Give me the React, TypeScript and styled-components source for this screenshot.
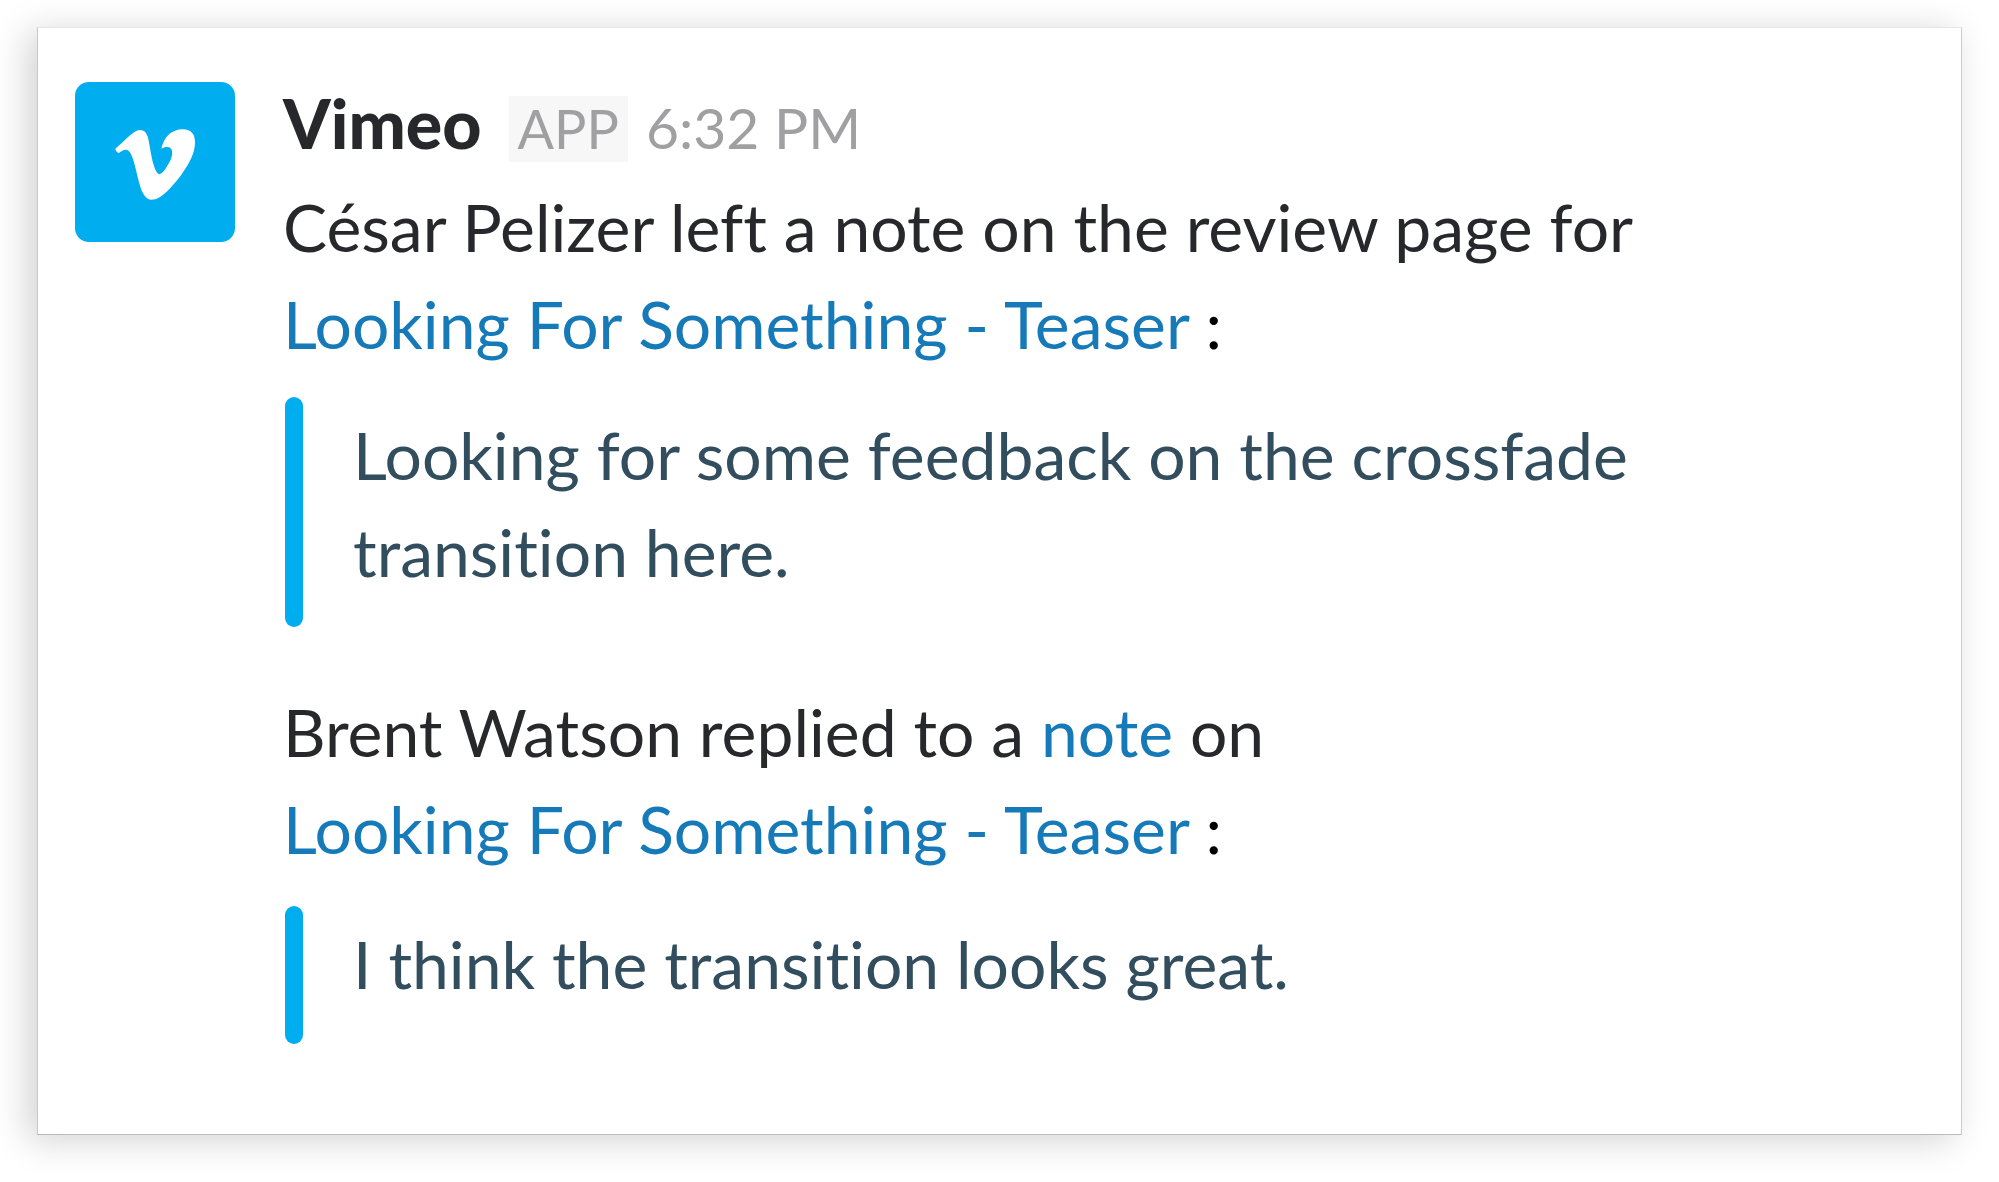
import React from 'react';
import styled, { createGlobalStyle } from 'styled-components';

const GlobalStyle = createGlobalStyle`
  body {
    margin: 0;
    background: #ffffff;
    font-family: Lato, 'Open Sans', sans-serif;
    font-variant-ligatures: none;
  }
`;

const Page = styled.main`
  padding: 27px 37px 46px;
`;

const Card = styled.article`
  display: flex;
  align-items: flex-start;
  gap: 48px;
  padding: 54px 72px 90px 37px;
  background: #ffffff;
  border: 1px solid;
  border-color: #e6e6e6 #cccccc #bbbbbb #c8c8c8;
  box-shadow: -9px 5px 34px rgba(0, 0, 0, 0.18);
`;

const Avatar = styled.svg`
  flex: none;
  width: 160px;
  height: 160px;
  border-radius: 14px;
  background: #00adef;
`;

const Content = styled.div`
  flex: 1;
  min-width: 0;
  color: #27282b;
  font-size: 66px;
  line-height: 97px;
`;

const Header = styled.header`
  display: flex;
  align-items: baseline;
  margin-bottom: 10px;
  line-height: 82px;
`;

const Sender = styled.strong`
  font-size: 68px;
  font-weight: 900;
`;

const AppBadge = styled.span`
  margin: 0 18px 0 27px;
  padding: 0 9px;
  background: #f7f7f7;
  color: #a0a0a2;
  font-size: 54px;
  line-height: 66px;
`;

const Time = styled.time`
  color: #a0a0a2;
  font-size: 57px;
`;

const Update = styled.section`
  & + & {
    margin-top: 56px;
  }
`;

const Sentence = styled.p`
  margin: 0;
`;

const Link = styled.a`
  color: #167ab9;
  text-decoration: none;
  white-space: nowrap;
`;

const Colon = styled.span`
  color: #000000;
`;

const Quote = styled.blockquote<{ $before: number; $after: number }>`
  display: flex;
  gap: 50px;
  margin: ${(p) => p.$before}px 0 0 2px;
  color: #314d5e;

  &::before {
    content: '';
    flex: none;
    width: 18px;
    border-radius: 9px;
    background: #00adef;
  }

  p {
    margin: 0;
    padding: 9px 0 ${(p) => p.$after}px;
  }
`;

const VideoLink = () => (
  <>
    <Link href="#video">Looking For Something - Teaser</Link> <Colon>:</Colon>
  </>
);

export default function App() {
  return (
    <>
      <GlobalStyle />
      <Page>
        <Card>
          <Avatar viewBox="0 0 480 480" role="img" aria-label="Vimeo">
            <path
              fill="#ffffff"
              d="M121 200C145 181 168 153 189 145C207 141 217 153 221 176C227 207 230 233 238 255C244 272 251 281 259 274C268 267 278 251 287 233C294 217 295 195 276 195C270 195 265 197 259 200C267 165 289 142 324 142C349 142 361 157 360 184C359 214 344 243 319 278C298 307 268 339 250 348C244 352 237 353 229 353C215 353 206 339 199 323C188 293 182 253 172 226C167 211 160 203 152 203C145 203 139 208 132 213C126 211 122 206 121 200Z"
            />
          </Avatar>
          <Content>
            <Header>
              <Sender>Vimeo</Sender>
              <AppBadge>APP</AppBadge>
              <Time dateTime="18:32">6:32 PM</Time>
            </Header>
            <Update>
              <Sentence>
                César Pelizer left a note on the review page for <VideoLink />
              </Sentence>
              <Quote $before={25} $after={27}>
                <p>Looking for some feedback on the crossfade transition here.</p>
              </Quote>
            </Update>
            <Update>
              <Sentence>
                Brent Watson replied to a <Link href="#note">note</Link> on <VideoLink />
              </Sentence>
              <Quote $before={29} $after={32}>
                <p>I think the transition looks great.</p>
              </Quote>
            </Update>
          </Content>
        </Card>
      </Page>
    </>
  );
}
